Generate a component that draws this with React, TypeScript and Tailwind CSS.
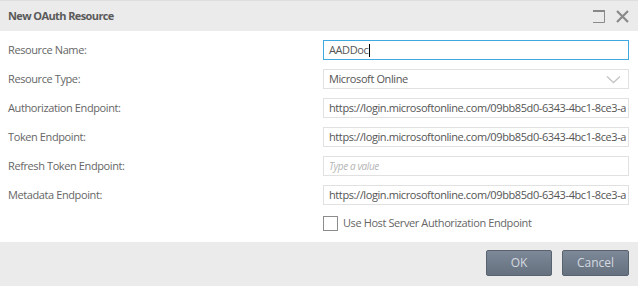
import React from "react";

const URL = "https://login.microsoftonline.com/09bb85d0-6343-4bc1-8ce3-a";

function Field({ children, active }: { children: React.ReactNode; active?: boolean }) {
  return (
    <div
      className={`h-5 w-[306px] flex items-center px-[5px] overflow-hidden whitespace-nowrap border ${
        active ? "border-[#3fa9df]" : "border-[#e1e1e1]"
      } text-[#555] bg-white`}
    >
      {children}
    </div>
  );
}

export default function App() {
  const rows: { label: string; content: React.ReactNode; active?: boolean }[] = [
    {
      label: "Resource Name:",
      active: true,
      content: (
        <>
          <span>AADDoc</span>
          <span className="inline-block w-px h-[13px] bg-black ml-[1px]" />
        </>
      ),
    },
    {
      label: "Resource Type:",
      content: (
        <div className="flex w-full items-center justify-between">
          <span>Microsoft Online</span>
          <svg width="15" height="9" viewBox="0 0 15 9" className="mr-[2px]">
            <path d="M1 1.5 L7.5 7.5 L14 1.5" fill="none" stroke="#c4c4c4" strokeWidth="1.3" />
          </svg>
        </div>
      ),
    },
    { label: "Authorization Endpoint:", content: <span>{URL}</span> },
    { label: "Token Endpoint:", content: <span>{URL}</span> },
    {
      label: "Refresh Token Endpoint:",
      content: <span className="italic text-[#b5b5b5] text-[10px]">Type a value</span>,
    },
    { label: "Metadata Endpoint:", content: <span>{URL}</span> },
  ];

  return (
    <div className="w-[638px] h-[286px] flex flex-col bg-white font-['Open_Sans',sans-serif] text-[11px] tracking-[-0.4px] overflow-hidden">
      <div className="h-[31px] shrink-0 bg-[#ebebeb] border-t border-[#dedede] flex items-center justify-between pl-[8px] pr-[9px]">
        <span className="font-bold text-[#5a5a5a] text-[11px] tracking-[-0.6px]">New OAuth Resource</span>
        <div className="flex items-center gap-[10px]">
          <svg width="13" height="13" viewBox="0 0 13 13">
            <path d="M0 1 H12" stroke="#888" strokeWidth="2" />
            <path d="M11.5 0 V12.5 H0" fill="none" stroke="#8a8a8a" strokeWidth="1" />
          </svg>
          <svg width="13" height="13" viewBox="0 0 13 13">
            <path d="M1 1 L12 12 M12 1 L1 12" stroke="#8a8a8a" strokeWidth="2.2" />
          </svg>
        </div>
      </div>
      <div className="flex-1 flex flex-col gap-[9px] pt-[9px] pl-[8px]">
        {rows.map((r) => (
          <div key={r.label} className="grid grid-cols-[315px_306px] items-center">
            <span className="text-[#666]">{r.label}</span>
            <Field active={r.active}>{r.content}</Field>
          </div>
        ))}
        <div className="grid grid-cols-[315px_306px] items-center mt-[1px]">
          <span />
          <div className="flex items-center gap-[5px]">
            <div className="w-[15px] h-[15px] border border-[#8c8c8c] bg-white" />
            <span className="text-[#666]">Use Host Server Authorization Endpoint</span>
          </div>
        </div>
      </div>
      <div className="h-[44px] shrink-0 bg-[#ebebeb] flex items-start justify-end gap-[10px] pt-[8px] pr-[9px]">
        <button className="w-[66px] h-[26px] rounded-[2px] border border-[#59636f] bg-gradient-to-b from-[#7d8898] to-[#66717f] text-[#d4d9e0] text-[12px] tracking-normal">
          OK
        </button>
        <button className="w-[67px] h-[26px] rounded-[2px] border border-[#59636f] bg-gradient-to-b from-[#7d8898] to-[#66717f] text-[#d4d9e0] text-[12px] tracking-normal">
          Cancel
        </button>
      </div>
    </div>
  );
}
